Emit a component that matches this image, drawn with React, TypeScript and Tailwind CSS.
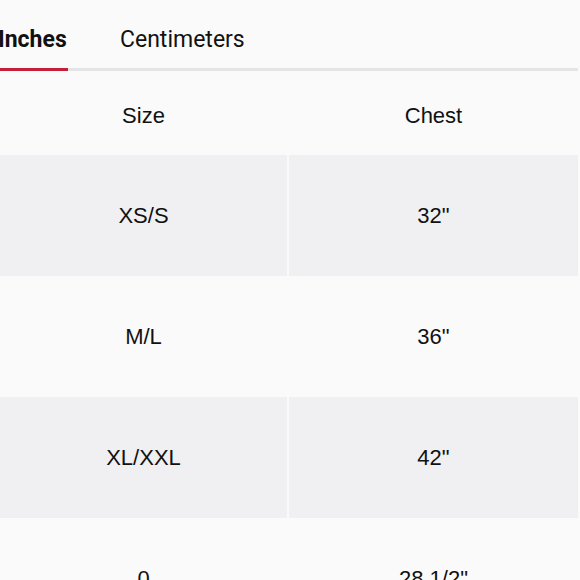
import React from 'react';

const rows: [string, string][] = [
  ['XS/S', '32"'],
  ['M/L', '36"'],
  ['XL/XXL', '42"'],
  ['0', '28 1/2"'],
];

const SizeChart: React.FC = () => {
  return (
    <div className="w-[580px] h-[580px] overflow-hidden bg-[#fafafa] text-[#111] font-['Roboto',sans-serif]">
      <div className="w-[578px]">
        {/* tabs */}
        <div className="flex h-[71px] border-b-[3px] border-[#e4e4e6]">
          <button className="relative -mb-[3px] w-[68px] h-[71px] text-left text-[23px] font-bold border-b-[3px] border-[#c41e3a] pt-[12px] overflow-hidden">
            <span className="block -ml-[2px]">Inches</span>
          </button>
          <button className="ml-[52px] h-[68px] text-[23px] pt-[12px]">Centimeters</button>
        </div>

        {/* header */}
        <div className="grid grid-cols-[287px_2px_289px] h-[84px] items-center text-[22px] font-['Liberation_Sans',sans-serif]">
          <div className="text-center mt-[5px]">Size</div>
          <div />
          <div className="text-center mt-[5px]">Chest</div>
        </div>

        {rows.map(([size, chest], i) => {
          const shaded = i % 2 === 0;
          return (
            <div key={size} className="grid grid-cols-[287px_2px_289px] h-[121px] text-[22px] font-['Liberation_Sans',sans-serif]">
              <div className={`flex items-center justify-center ${shaded ? 'bg-[#f0f0f2]' : ''}`}>{size}</div>
              <div />
              <div className={`flex items-center justify-center ${shaded ? 'bg-[#f0f0f2]' : ''}`}>{chest}</div>
            </div>
          );
        })}
      </div>
    </div>
  );
};

export default function App() {
  return <SizeChart />;
}
